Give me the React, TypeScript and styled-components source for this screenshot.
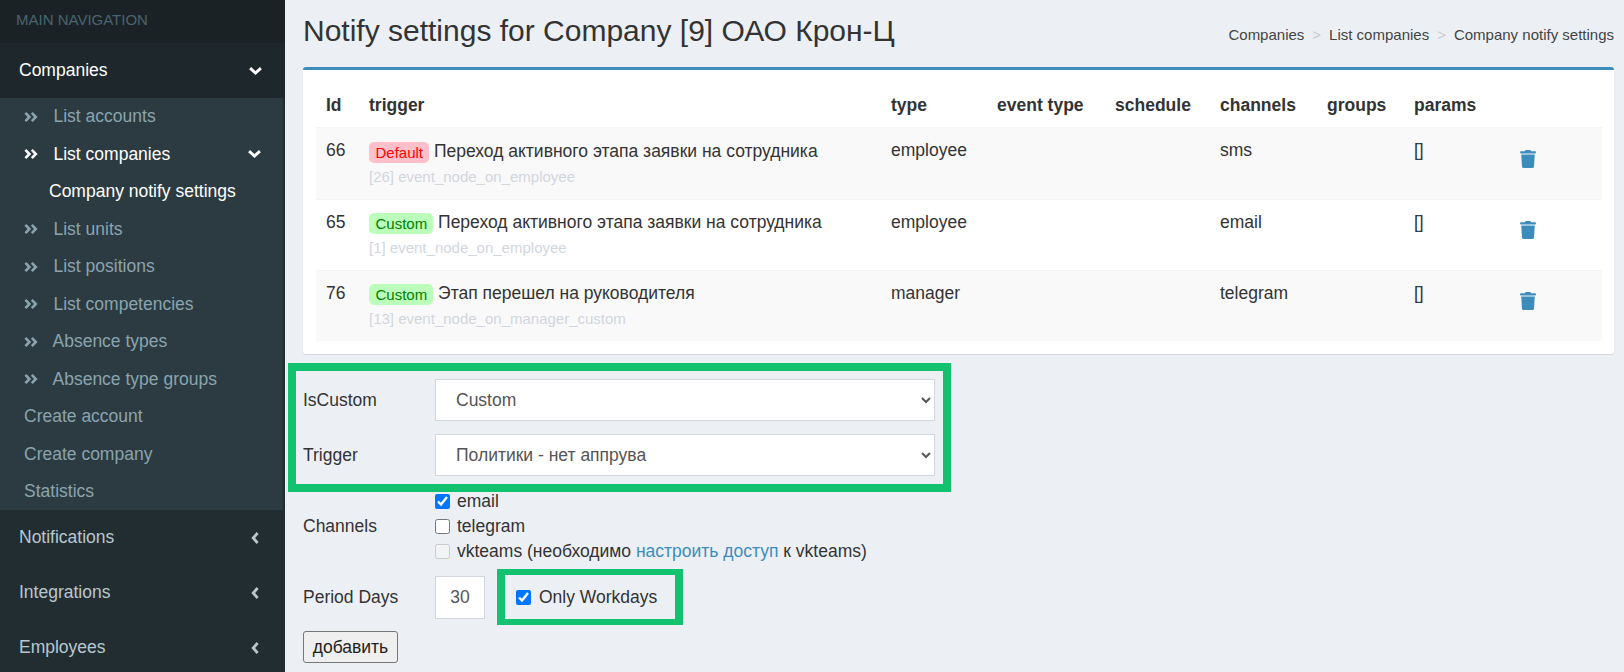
import styled, { createGlobalStyle } from 'styled-components'
import { FaTrash } from 'react-icons/fa'

const GlobalStyle = createGlobalStyle`
  html, body {
    margin: 0;
    padding: 0;
    height: 100%;
    overflow: hidden;
  }
  body {
    background: #ecf0f5;
    font-family: 'Liberation Sans', Arial, sans-serif;
    font-size: 17.5px;
    color: #333;
  }
  * {
    box-sizing: border-box;
  }
`

const subItems = [
  { text: 'List accounts', icon: true },
  { text: 'List companies', icon: true, active: true, open: true },
  { text: 'Company notify settings', nested: true },
  { text: 'List units', icon: true },
  { text: 'List positions', icon: true },
  { text: 'List competencies', icon: true },
  { text: 'Absence types', icon: true, tight: true },
  { text: 'Absence type groups', icon: true, tight: true },
  { text: 'Create account' },
  { text: 'Create company' },
  { text: 'Statistics' },
]

const rows = [
  { id: 66, tag: 'Default', title: 'Переход активного этапа заявки на сотрудника', sub: '[26] event_node_on_employee', type: 'employee', channel: 'sms' },
  { id: 65, tag: 'Custom', title: 'Переход активного этапа заявки на сотрудника', sub: '[1] event_node_on_employee', type: 'employee', channel: 'email' },
  { id: 76, tag: 'Custom', title: 'Этап перешел на руководителя', sub: '[13] event_node_on_manager_custom', type: 'manager', channel: 'telegram' },
]

const AngleDown = () => (
  <svg width="13" height="8" viewBox="0 0 13 8" fill="none" stroke="currentColor" strokeWidth="2.9">
    <path d="M1.1 1.1 L6.5 6 L11.9 1.1" />
  </svg>
)

const AngleLeft = () => (
  <svg width="8" height="12" viewBox="0 0 8 12" fill="none" stroke="currentColor" strokeWidth="2.8">
    <path d="M6.6 1 L2.2 6 L6.6 11" />
  </svg>
)

const AngleDoubleRight = () => (
  <svg width="14" height="10" viewBox="0 0 14 10" fill="none" stroke="currentColor" strokeWidth="2.6">
    <path d="M1.4 0.9 L5.4 5 L1.4 9.1" />
    <path d="M7.8 0.9 L11.8 5 L7.8 9.1" />
  </svg>
)

const App = () => {
  return (
    <>
      <GlobalStyle />
      <Page>
        <Sidebar>
          <NavHeader>MAIN NAVIGATION</NavHeader>
          <TopItem $open>
            Companies
            <AngleDown />
          </TopItem>
          <SubMenu>
            {subItems.map((item) => (
              <SubItem key={item.text} $active={item.active} $nested={item.nested} $tight={item.tight}>
                {item.icon && <AngleDoubleRight />}
                <span>{item.text}</span>
                {item.open && (
                  <OpenArrow>
                    <AngleDown />
                  </OpenArrow>
                )}
              </SubItem>
            ))}
          </SubMenu>
          {['Notifications', 'Integrations', 'Employees'].map((text) => (
            <TopItem key={text}>
              {text}
              <AngleLeft />
            </TopItem>
          ))}
        </Sidebar>
        <Content>
          <Header>
            <Title>Notify settings for Company [9] ОАО Крон-Ц</Title>
            <Breadcrumb>
              <span>Companies</span>
              <Sep>&gt;</Sep>
              <span>List companies</span>
              <Sep>&gt;</Sep>
              <span>Company notify settings</span>
            </Breadcrumb>
          </Header>
          <Box>
            <Table>
              <colgroup>
                <col width="43" />
                <col width="522" />
                <col width="106" />
                <col width="118" />
                <col width="105" />
                <col width="107" />
                <col width="87" />
                <col width="88" />
                <col />
              </colgroup>
              <thead>
                <tr>
                  <th>Id</th>
                  <th>trigger</th>
                  <th>type</th>
                  <th>event type</th>
                  <th>schedule</th>
                  <th>channels</th>
                  <th>groups</th>
                  <th>params</th>
                  <th />
                </tr>
              </thead>
              <tbody>
                {rows.map((row) => (
                  <tr key={row.id}>
                    <td>{row.id}</td>
                    <td>
                      <Tag $custom={row.tag === 'Custom'}>{row.tag}</Tag> {row.title}
                      <SubText>{row.sub}</SubText>
                    </td>
                    <td>{row.type}</td>
                    <td />
                    <td />
                    <td>{row.channel}</td>
                    <td />
                    <td>[]</td>
                    <td>
                      <TrashButton>
                        <FaTrash />
                      </TrashButton>
                    </td>
                  </tr>
                ))}
              </tbody>
            </Table>
          </Box>
          <Form>
            <Marked>
              <FormRow>
                <Label>IsCustom</Label>
                <Select defaultValue="Custom">
                  <option>Custom</option>
                  <option>Default</option>
                </Select>
              </FormRow>
              <FormRow>
                <Label>Trigger</Label>
                <Select defaultValue="Политики - нет аппрува">
                  <option>Политики - нет аппрува</option>
                </Select>
              </FormRow>
            </Marked>
            <ChannelsRow>
              <Label>Channels</Label>
              <Checks>
                <CheckLine>
                  <input type="checkbox" defaultChecked />
                  email
                </CheckLine>
                <CheckLine>
                  <input type="checkbox" />
                  telegram
                </CheckLine>
                <CheckLine>
                  <input type="checkbox" disabled />
                  <span>
                    vkteams (необходимо <Link>настроить доступ</Link> к vkteams)
                  </span>
                </CheckLine>
              </Checks>
            </ChannelsRow>
            <PeriodRow>
              <Label>Period Days</Label>
              <NumberInput defaultValue="30" />
              <WorkdaysMark>
                <input type="checkbox" defaultChecked />
                Only Workdays
              </WorkdaysMark>
            </PeriodRow>
            <AddButton>добавить</AddButton>
          </Form>
        </Content>
      </Page>
    </>
  )
}
export default App

const Page = styled.div`
  display: flex;
  width: 1624px;
  height: 672px;
  overflow: hidden;
`

const Sidebar = styled.aside`
  width: 285px;
  flex: none;
  height: 672px;
  overflow: hidden;
  background: #222d32;
`

const NavHeader = styled.div`
  height: 43px;
  padding: 0 0 4px 16px;
  display: flex;
  align-items: center;
  background: #1a2226;
  color: #4b646f;
  font-size: 15px;
`

const TopItem = styled.div<{ $open?: boolean }>`
  height: 55px;
  padding: 0 ${(p) => (p.$open ? '23px' : '26px')} 0 19px;
  display: flex;
  align-items: center;
  justify-content: space-between;
  color: ${(p) => (p.$open ? '#fff' : '#b8c7ce')};
  background: ${(p) => (p.$open ? '#1e282c' : '#222d32')};
`

const SubMenu = styled.div`
  width: 283px;
  height: 412px;
  background: #2c3b41;
`

const SubItem = styled.div<{ $active?: boolean; $nested?: boolean; $tight?: boolean }>`
  height: 37.5px;
  display: flex;
  align-items: center;
  padding-left: ${(p) => (p.$nested ? '49px' : '24px')};
  color: ${(p) => (p.$active || p.$nested ? '#fff' : '#8aa4af')};

  > svg:first-child {
    margin-right: ${(p) => (p.$tight ? '14.5px' : '15.5px')};
  }
`

const OpenArrow = styled.span`
  display: flex;
  margin-left: auto;
  margin-right: 22px;
`

const Content = styled.main`
  flex: 1;
  min-width: 0;
  padding: 0 10px 0 18px;
`

const Header = styled.div`
  height: 67px;
  display: flex;
  align-items: flex-start;
  justify-content: space-between;
`

const Title = styled.h1`
  margin: 13px 0 0;
  font-size: 30px;
  font-weight: 400;
  line-height: 36px;
`

const Breadcrumb = styled.div`
  display: flex;
  margin-top: 25px;
  font-size: 15px;
  line-height: 20px;
  color: #444;
`

const Sep = styled.span`
  margin: 0 8px;
  color: #ccc;
`

const Box = styled.section`
  height: 287px;
  padding: 15px 12px 0 13px;
  background: #fff;
  border-top: 3px solid #3c8dbc;
  border-radius: 3px;
  box-shadow: 0 1px 1px rgba(0, 0, 0, 0.1);
`

const Table = styled.table`
  width: 100%;
  border-collapse: collapse;
  table-layout: fixed;

  th {
    height: 42px;
    padding: 0 10px;
    text-align: left;
    font-weight: 700;
    vertical-align: middle;
  }

  td {
    padding: 11px 10px 0;
    height: 71px;
    vertical-align: top;
    border-top: 1px solid #f4f4f4;
    line-height: 22px;
  }

  tbody tr:first-child td {
    height: 72px;
  }

  tbody tr:first-child td:nth-child(2) {
    padding-top: 12px;
  }

  tbody tr:nth-child(odd) {
    background: #f9f9f9;
  }
`

const Tag = styled.span<{ $custom?: boolean }>`
  display: inline-block;
  padding: 0 6px 0 6.5px;
  height: 21px;
  line-height: 22px;
  border-radius: 5px;
  font-size: 15px;
  vertical-align: -1px;
  color: ${(p) => (p.$custom ? '#008000' : '#ff0000')};
  background: ${(p) => (p.$custom ? '#bbffbb' : '#ffc0cb')};
`

const SubText = styled.div`
  font-size: 15px;
  line-height: 20px;
  margin-top: 4px;
  color: #d2d6de;
`

const TrashButton = styled.span`
  display: block;
  margin: 10px 0 0 18px;
  color: #3c8dbc;

  tr:first-child & {
    margin-top: 11px;
  }

  svg {
    display: block;
    width: 16px;
    height: 18px;
  }
`

const Form = styled.form`
  padding: 25px 0 0 1px;
`

const Marked = styled.div`
  width: 631px;
  display: flex;
  flex-direction: column;
  gap: 13px;
  outline: 8px solid #12c26e;
  outline-offset: 8px;
`

const FormRow = styled.div`
  display: flex;
  align-items: center;
`

const Label = styled.label`
  width: 132px;
  flex: none;
  margin-left: -1px;
`

const Select = styled.select`
  width: 500px;
  height: 42px;
  padding: 0 16px;
  background: #fff;
  border: 1px solid #d2d6de;
  border-radius: 0;
  font: inherit;
  color: #555;
`

const ChannelsRow = styled.div`
  display: flex;
  align-items: center;
  margin-top: 13px;
`

const Checks = styled.div`
  display: flex;
  flex-direction: column;
`

const CheckLine = styled.label`
  height: 25px;
  display: flex;
  align-items: center;
  gap: 7px;

  input {
    width: 15px;
    height: 15px;
    margin: 0;
  }
`

const Link = styled.a`
  color: #3c8dbc;
`

const PeriodRow = styled.div`
  display: flex;
  align-items: center;
  margin-top: 5px;
`

const NumberInput = styled.input`
  width: 50px;
  height: 43px;
  padding: 0 8px;
  text-align: center;
  background: #fff;
  border: 1px solid #d2d6de;
  font: inherit;
  color: #555;
`

const WorkdaysMark = styled.label`
  width: 186px;
  height: 56px;
  margin-left: 12px;
  padding-left: 11px;
  display: flex;
  align-items: center;
  gap: 8px;
  border: solid #12c26e;
  border-width: 6px 8px;

  input {
    width: 15px;
    height: 15px;
    margin: 0;
  }
`

const AddButton = styled.button`
  display: block;
  width: 95px;
  height: 32px;
  margin: 6px 0 0 -1px;
  padding: 0;
  font: inherit;
  color: #222;
  background: #efefef;
  border: 1px solid #767676;
  border-radius: 3px;
`
